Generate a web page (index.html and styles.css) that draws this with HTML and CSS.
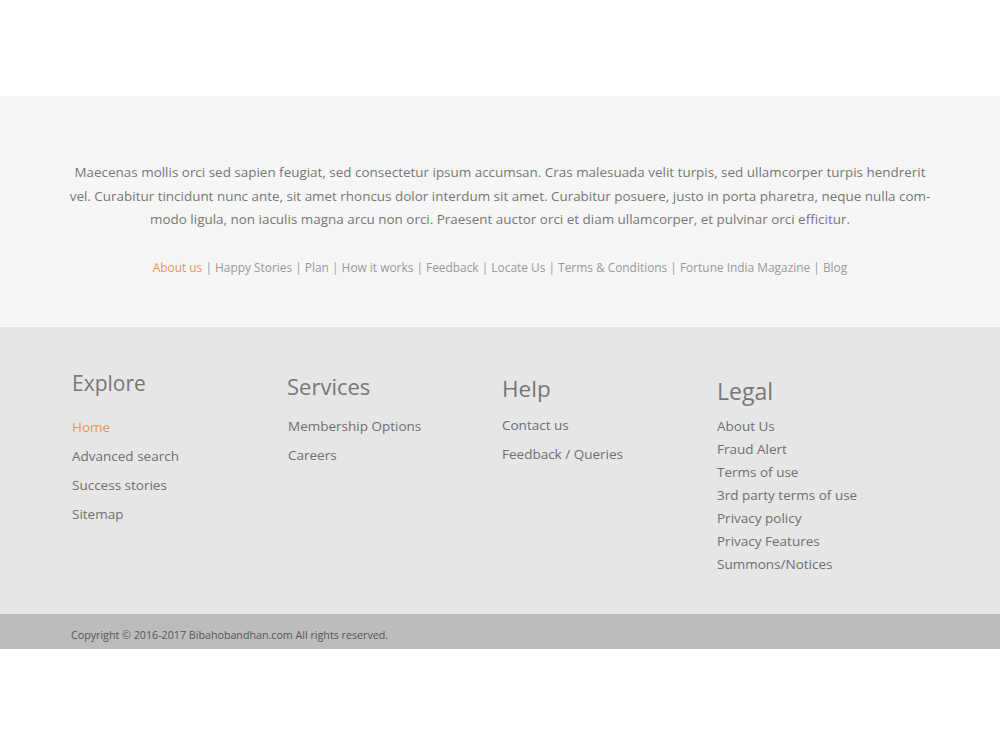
FILE: index.html
```html
<!DOCTYPE html>
<html lang="en">
<head>
    <meta charset="UTF-8">
    <meta name="viewport" content="width=device-width, initial-scale=1.0">
    <title>Bibahobandhan Footer</title>
    <link rel="stylesheet" href="styles.css">
</head>
<body>
    <div class="top-space"></div>

    <section class="about">
        <p class="about-text">Maecenas mollis orci sed sapien feugiat, sed consectetur ipsum accumsan. Cras malesuada velit turpis, sed ullamcorper turpis hendrerit vel. Curabitur tincidunt nunc ante, sit amet rhoncus dolor interdum sit amet. Curabitur posuere, justo in porta pharetra, neque nulla com&shy;modo ligula, non iaculis magna arcu non orci. Praesent auctor orci et diam ullamcorper, et pulvinar orci efficitur.</p>
        <nav class="quick-links">
            <a href="#" class="active">About us</a> | <a href="#">Happy Stories</a> | <a href="#">Plan</a> | <a href="#">How it works</a> | <a href="#">Feedback</a> | <a href="#">Locate Us</a> | <a href="#">Terms &amp; Conditions</a> | <a href="#">Fortune India Magazine</a> | <a href="#">Blog</a>
        </nav>
    </section>

    <footer class="footer">
        <div class="footer-cols">
            <div class="col col-explore">
                <h3>Explore</h3>
                <ul>
                    <li><a href="#" class="active">Home</a></li>
                    <li><a href="#">Advanced search</a></li>
                    <li><a href="#">Success stories</a></li>
                    <li><a href="#">Sitemap</a></li>
                </ul>
            </div>
            <div class="col col-services">
                <h3>Services</h3>
                <ul>
                    <li><a href="#">Membership Options</a></li>
                    <li><a href="#">Careers</a></li>
                </ul>
            </div>
            <div class="col col-help">
                <h3>Help</h3>
                <ul>
                    <li><a href="#">Contact us</a></li>
                    <li><a href="#">Feedback / Queries</a></li>
                </ul>
            </div>
            <div class="col col-legal">
                <h3>Legal</h3>
                <ul class="tight">
                    <li><a href="#">About Us</a></li>
                    <li><a href="#">Fraud Alert</a></li>
                    <li><a href="#">Terms of use</a></li>
                    <li><a href="#">3rd party terms of use</a></li>
                    <li><a href="#">Privacy policy</a></li>
                    <li><a href="#">Privacy Features</a></li>
                    <li><a href="#">Summons/Notices</a></li>
                </ul>
            </div>
        </div>
    </footer>

    <div class="copyright">Copyright &copy; 2016-2017 Bibahobandhan.com All rights reserved.</div>
</body>
</html>
```

FILE: styles.css
```css
:root {
    --text-color: #6f6f6f;
    --accent-color: #e9964c;
}

* {
    box-sizing: border-box;
    margin: 0;
    padding: 0;
}

body {
    font-family: 'Open Sans', 'Liberation Sans', sans-serif;
    background-color: #fff;
    color: var(--text-color);
}

a {
    color: inherit;
    text-decoration: none;
}

a.active {
    color: var(--accent-color);
}

.top-space {
    height: 96px;
}

.about {
    background-color: #f6f6f6;
    height: 231px;
    padding-top: 65px;
}

.about-text {
    width: 866px;
    margin: 0 auto;
    text-align: center;
    font-size: 13.45px;
    line-height: 23.5px;
    color: #777;
}

.quick-links {
    margin-top: 25px;
    text-align: center;
    font-size: 11.9px;
    line-height: 20px;
    color: #999;
}

.footer {
    background-color: #e6e6e6;
    height: 287px;
    padding: 41px 0 0 72px;
}

.footer-cols {
    display: flex;
}

.col {
    width: 215px;
}

.col h3 {
    font-weight: 400;
    font-size: 21px;
    line-height: 30px;
    color: #777;
    margin-bottom: 15px;
}

.col-services h3 {
    font-size: 22px;
    margin-top: 3px;
}

.col-help h3 {
    font-size: 22.5px;
    margin-top: 6px;
}

.col-legal h3 {
    font-size: 23px;
    margin-top: 8px;
}

.col ul {
    list-style: none;
    font-size: 13.5px;
    line-height: 29px;
}

.col-services ul {
    margin-left: 1px;
    margin-top: -4px;
}

.col-help ul {
    margin-top: -8px;
}

.col ul.tight {
    line-height: 23px;
    margin-top: -6px;
}

.copyright {
    background-color: #bcbcbc;
    height: 35px;
    padding-left: 71px;
    font-size: 10.7px;
    line-height: 42px;
    color: #555;
}
```
